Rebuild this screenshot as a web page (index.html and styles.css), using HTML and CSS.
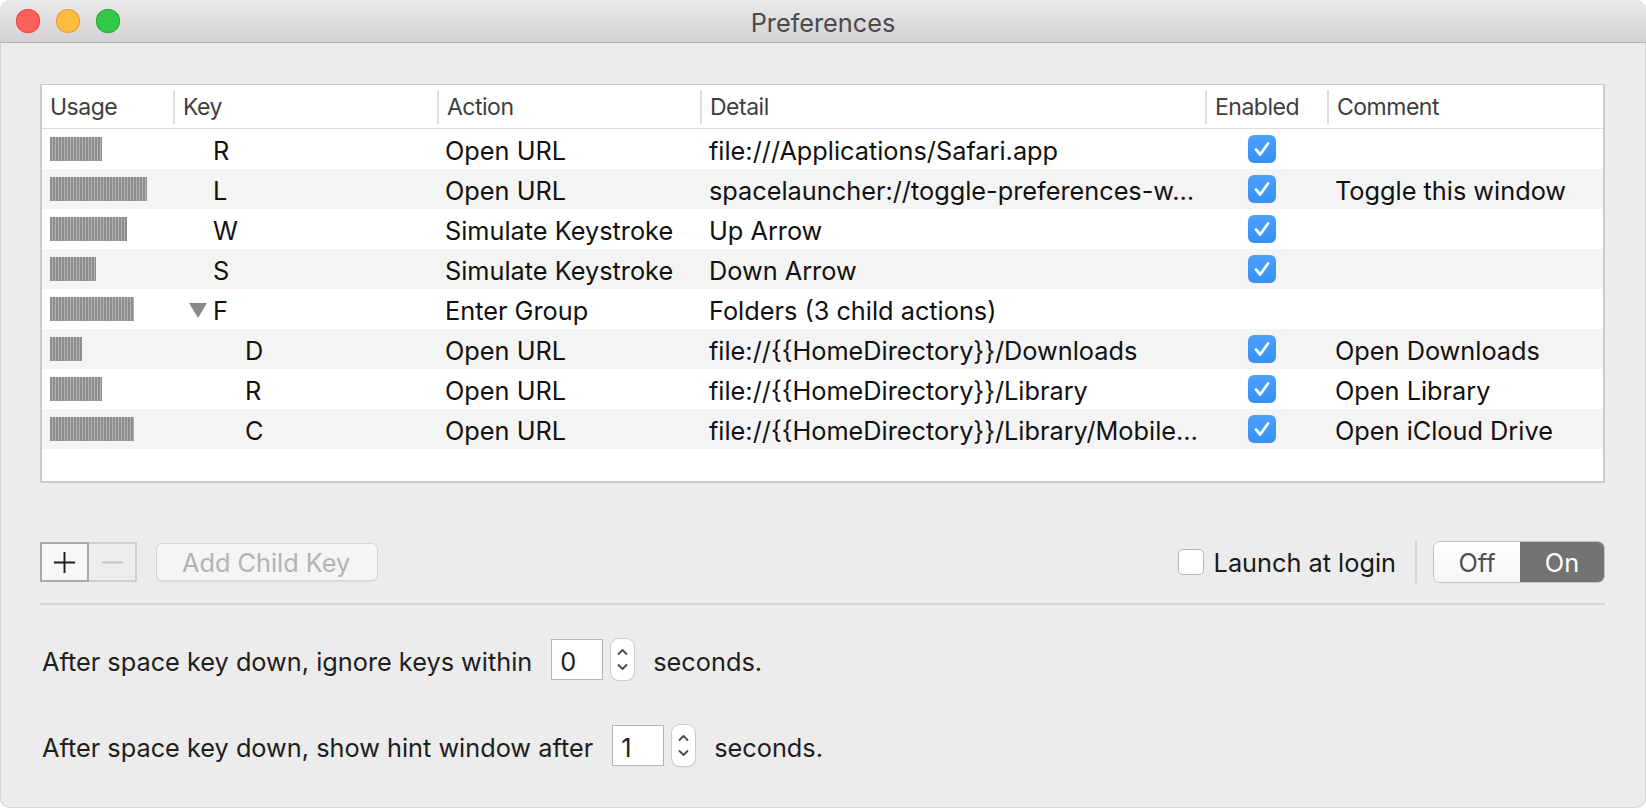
FILE: index.html
```html
<!DOCTYPE html>
<html lang="en">
<head>
<meta charset="utf-8">
<title>Preferences</title>
<link rel="stylesheet" href="styles.css">
</head>
<body>
<div class="window">
  <div class="titlebar">
    <div class="lights">
      <span class="light red"></span>
      <span class="light yellow"></span>
      <span class="light green"></span>
    </div>
    <div class="title">Preferences</div>
  </div>
  <div class="content">
    <div class="table">
      <div class="row head">
        <div class="cell first">Usage</div>
        <div class="cell sep">Key</div>
        <div class="cell sep">Action</div>
        <div class="cell sep">Detail</div>
        <div class="cell sep">Enabled</div>
        <div class="cell sep">Comment</div>
      </div>

      <div class="row">
        <div class="cell first"><span class="bar" style="width:52px"></span></div>
        <div class="cell key">R</div>
        <div class="cell">Open URL</div>
        <div class="cell detail">file:///Applications/Safari.app</div>
        <div class="cell check"><span class="cb on"><svg viewBox="0 0 28 28"><path d="M8 14.5 L12.2 19.5 L20 8.5"/></svg></span></div>
        <div class="cell"></div>
      </div>
      <div class="row alt">
        <div class="cell first"><span class="bar" style="width:97px"></span></div>
        <div class="cell key">L</div>
        <div class="cell">Open URL</div>
        <div class="cell detail">spacelauncher://toggle-preferences-w…</div>
        <div class="cell check"><span class="cb on"><svg viewBox="0 0 28 28"><path d="M8 14.5 L12.2 19.5 L20 8.5"/></svg></span></div>
        <div class="cell">Toggle this window</div>
      </div>
      <div class="row">
        <div class="cell first"><span class="bar" style="width:77px"></span></div>
        <div class="cell key">W</div>
        <div class="cell">Simulate Keystroke</div>
        <div class="cell detail">Up Arrow</div>
        <div class="cell check"><span class="cb on"><svg viewBox="0 0 28 28"><path d="M8 14.5 L12.2 19.5 L20 8.5"/></svg></span></div>
        <div class="cell"></div>
      </div>
      <div class="row alt">
        <div class="cell first"><span class="bar" style="width:46px"></span></div>
        <div class="cell key">S</div>
        <div class="cell">Simulate Keystroke</div>
        <div class="cell detail">Down Arrow</div>
        <div class="cell check"><span class="cb on"><svg viewBox="0 0 28 28"><path d="M8 14.5 L12.2 19.5 L20 8.5"/></svg></span></div>
        <div class="cell"></div>
      </div>
      <div class="row">
        <div class="cell first"><span class="bar" style="width:84px"></span></div>
        <div class="cell key group"><span class="tri"></span>F</div>
        <div class="cell">Enter Group</div>
        <div class="cell detail">Folders (3 child actions)</div>
        <div class="cell check"></div>
        <div class="cell"></div>
      </div>
      <div class="row alt">
        <div class="cell first"><span class="bar" style="width:32px"></span></div>
        <div class="cell key child">D</div>
        <div class="cell">Open URL</div>
        <div class="cell detail">file://{{HomeDirectory}}/Downloads</div>
        <div class="cell check"><span class="cb on"><svg viewBox="0 0 28 28"><path d="M8 14.5 L12.2 19.5 L20 8.5"/></svg></span></div>
        <div class="cell">Open Downloads</div>
      </div>
      <div class="row">
        <div class="cell first"><span class="bar" style="width:52px"></span></div>
        <div class="cell key child">R</div>
        <div class="cell">Open URL</div>
        <div class="cell detail">file://{{HomeDirectory}}/Library</div>
        <div class="cell check"><span class="cb on"><svg viewBox="0 0 28 28"><path d="M8 14.5 L12.2 19.5 L20 8.5"/></svg></span></div>
        <div class="cell">Open Library</div>
      </div>
      <div class="row alt">
        <div class="cell first"><span class="bar" style="width:84px"></span></div>
        <div class="cell key child">C</div>
        <div class="cell">Open URL</div>
        <div class="cell detail">file://{{HomeDirectory}}/Library/Mobile…</div>
        <div class="cell check"><span class="cb on"><svg viewBox="0 0 28 28"><path d="M8 14.5 L12.2 19.5 L20 8.5"/></svg></span></div>
        <div class="cell">Open iCloud Drive</div>
      </div>
    </div>

    <div class="toolbar">
      <div class="addrem">
        <button class="pm plus"><svg viewBox="0 0 24 24"><path d="M12 1 V23 M1 12 H23"/></svg></button>
        <button class="pm minus"><svg viewBox="0 0 24 24"><path d="M1 12 H23"/></svg></button>
      </div>
      <button class="childbtn">Add Child Key</button>
      <div class="spacer"></div>
      <label class="login"><span class="cb off"></span>Launch at login</label>
      <span class="vsep"></span>
      <div class="seg">
        <span class="segitem offseg">Off</span>
        <span class="segitem onseg">On</span>
      </div>
    </div>

    <div class="hsep"></div>

    <div class="line first-line">
      <span class="txt">After space key down, ignore keys within</span>
      <span class="field">0</span>
      <span class="stepper"><svg viewBox="0 0 23 41"><path d="M7.5 15 L11.5 11 L15.5 15 M7.5 26 L11.5 30 L15.5 26"/></svg></span>
      <span class="txt">seconds.</span>
    </div>
    <div class="line second-line">
      <span class="txt">After space key down, show hint window after</span>
      <span class="field">1</span>
      <span class="stepper"><svg viewBox="0 0 23 41"><path d="M7.5 15 L11.5 11 L15.5 15 M7.5 26 L11.5 30 L15.5 26"/></svg></span>
      <span class="txt">seconds.</span>
    </div>
  </div>
</div>
</body>
</html>
```

FILE: styles.css
```css
* { box-sizing: border-box; }

html, body {
  margin: 0;
  padding: 0;
  background: #ffffff;
}

body {
  font-family: "Inter", "Roboto", "Liberation Sans", sans-serif;
  font-size: 25.3px;
  color: #111;
}

.window {
  width: 1646px;
  height: 808px;
  background: #ececec;
  border-radius: 10px;
  overflow: hidden;
  display: flex;
  flex-direction: column;
  box-shadow: inset 0 0 0 1px #d4d4d4;
}

.titlebar {
  height: 43px;
  flex: none;
  background: linear-gradient(#ebe9eb, #d3d1d3);
  border-bottom: 1px solid #b3b3b3;
  display: grid;
  grid-template-columns: 1fr auto 1fr;
  align-items: center;
}

.lights {
  display: flex;
  gap: 16px;
  padding-left: 16px;
}

.light {
  width: 24px;
  height: 24px;
  border-radius: 50%;
  display: block;
}
.red { background: #fc605c; box-shadow: inset 0 0 0 1px #df4a45; }
.yellow { background: #fdbc40; box-shadow: inset 0 0 0 1px #dfa035; }
.green { background: #34c84a; box-shadow: inset 0 0 0 1px #27aa36; }

.title {
  color: #4a4a4a;
  font-size: 25.3px;
  padding-top: 2px;
}

.content {
  flex: 1;
  padding: 41px 41px 0 40px;
  display: flex;
  flex-direction: column;
}

.table {
  height: 399px;
  background: #fff;
  border: 2px solid #cbcbcb;
  border-top-width: 1px;
}

.row {
  display: grid;
  grid-template-columns: 131px 264px 263px 505px 122px 1fr;
  height: 40px;
  align-items: center;
}

.row.alt { background: #f4f4f4; }

.row.head {
  height: 44px;
  border-bottom: 1px solid #dcdcdc;
  color: #3e3e3e;
  font-size: 23px;
  letter-spacing: -0.5px;
}

.cell {
  padding-left: 8px;
  white-space: nowrap;
  overflow: hidden;
  height: 100%;
  display: flex;
  align-items: center;
  padding-top: 2px;
}

.cell.first { padding-left: 8px; padding-top: 0; }

.head .cell { padding-left: 10px; padding-top: 1px; }
.head .cell.first { padding-left: 8px; }

.head .cell.sep {
  background: linear-gradient(#dedede, #dedede) no-repeat 0 50% / 2px 34px;
}

.cell.detail { padding-left: 9px; }

.bar {
  display: block;
  height: 24px;
  background: repeating-linear-gradient(90deg, #8c8c8c 0 2px, #b4b4b4 2px 3px);
}

.cell.key { padding-left: 40px; }
.cell.key.child { padding-left: 72px; }
.cell.key.group { padding-left: 16px; }

.tri {
  width: 0;
  height: 0;
  border-left: 9px solid transparent;
  border-right: 9px solid transparent;
  border-top: 15px solid #8a8a8a;
  margin-right: 6px;
}

.cell.check { padding-left: 43px; padding-top: 0; }

.cb {
  display: block;
  width: 28px;
  height: 28px;
  border-radius: 6px;
}

.cb.on {
  background: linear-gradient(#4aa0fb, #3690f5);
}

.cb svg {
  width: 28px;
  height: 28px;
  display: block;
}

.cb svg path {
  fill: none;
  stroke: #fff;
  stroke-width: 2.8;
  stroke-linecap: round;
  stroke-linejoin: round;
}

.toolbar {
  margin-top: 58px;
  height: 42px;
  display: flex;
  align-items: center;
}

.addrem {
  display: flex;
  height: 40px;
}

button {
  font-family: inherit;
  font-size: inherit;
  margin: 0;
  padding: 0;
}

.pm {
  width: 49px;
  height: 40px;
  display: flex;
  align-items: center;
  justify-content: center;
}

.pm svg {
  width: 23px;
  height: 23px;
}

.pm.plus {
  background: #f7f7f7;
  border: 2px solid #a9a9a9;
}

.pm.plus path {
  stroke: #1c1c1c;
  stroke-width: 2;
}

.pm.minus {
  width: 48px;
  background: #ededed;
  border: 2px solid #cfcfcf;
  border-left: none;
}

.pm.minus path {
  stroke: #c4c4c4;
  stroke-width: 2;
}

.childbtn {
  margin-left: 19px;
  width: 222px;
  height: 38px;
  border-radius: 6px;
  background: #f5f5f5;
  border: 1px solid #d6d6d6;
  color: #b3b3b3;
  text-align: left;
  padding-left: 25px;
  box-shadow: 0 1px 0 #dcdcdc;
}

.spacer { flex: 1; }

.login {
  display: flex;
  align-items: center;
  color: #1a1a1a;
}

.cb.off {
  width: 26px;
  height: 26px;
  background: #fff;
  border: 1px solid #b7b7b7;
  border-radius: 5px;
  margin-right: 10px;
}

.vsep {
  width: 2px;
  height: 42px;
  background: #d2d2d2;
  margin: 0 16px 0 19px;
}

.seg {
  display: flex;
  height: 42px;
  width: 172px;
  border-radius: 7px;
  overflow: hidden;
  border: 1px solid #c2c2c2;
}

.segitem {
  display: flex;
  align-items: center;
  justify-content: center;
  flex: 1;
}

.offseg {
  background: linear-gradient(#ffffff, #f6f6f6);
  color: #4e4e4e;
  width: 86px;
  flex: none;
}

.onseg {
  background: #737373;
  color: #fff;
}

.hsep {
  margin-top: 20px;
  height: 2px;
  background: #d6d6d6;
}

.line {
  display: flex;
  align-items: center;
  height: 41px;
  color: #1e1e1e;
  padding-left: 2px;
}

.line .txt { padding-top: 4px; }

.first-line { margin-top: 34px; }
.second-line { margin-top: 45px; }

.field {
  width: 52px;
  height: 41px;
  background: #fff;
  border: 1px solid #b5b5b5;
  margin-left: 19px;
  padding-left: 8px;
  padding-top: 3px;
  display: flex;
  align-items: center;
}

.stepper {
  width: 23px;
  height: 41px;
  margin-left: 8px;
  margin-right: 19px;
  background: #fff;
  border-radius: 8px;
  box-shadow: 0 0 0 1px #cbcbcb, 0 1px 1px #c8c8c8;
}

.stepper svg {
  width: 23px;
  height: 41px;
  display: block;
}

.stepper path {
  fill: none;
  stroke: #4a4a4a;
  stroke-width: 1.8;
  stroke-linecap: round;
  stroke-linejoin: round;
}
```
